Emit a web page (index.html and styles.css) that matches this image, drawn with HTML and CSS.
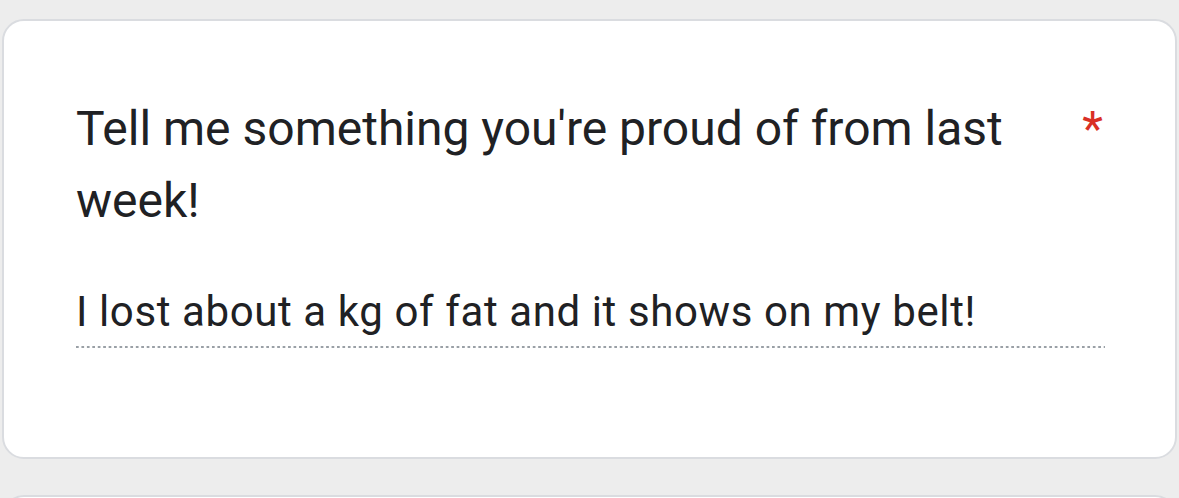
FILE: index.html
```html
<!DOCTYPE html>
<html lang="en">
<head>
<meta charset="utf-8">
<title>Question</title>
<link rel="stylesheet" href="styles.css">
</head>
<body>
<div class="page">
  <div class="card">
    <div class="title-row">
      <div class="title">Tell me something you're proud of from last week!</div>
      <span class="required" aria-label="Required question">*</span>
    </div>
    <div class="answer">
      <div class="answer-text">I lost about a kg of fat and it shows on my belt!</div>
      <div class="dots"></div>
    </div>
  </div>
  <div class="card next"></div>
</div>
</body>
</html>
```

FILE: styles.css
```css
html, body {
  margin: 0;
  padding: 0;
  background: #ededed;
  height: 498px;
  overflow: hidden;
}
body {
  font-family: Roboto, "Noto Sans", Arial, sans-serif;
  color: #202124;
}
.page {
  box-sizing: border-box;
  height: 498px;
  overflow: hidden;
  padding: 19px 2px 0 2px;
  display: flex;
  flex-direction: column;
  gap: 36px;
}
.card {
  box-sizing: border-box;
  background: #fff;
  border: 2px solid #dadce0;
  border-radius: 22px;
  padding: 72px 72px 109px 72px;
  flex-shrink: 0;
}
.card.next {
  height: 200px;
}
.title-row {
  display: flex;
  align-items: flex-start;
}
.title {
  flex: 1;
  font-size: 48px;
  line-height: 72px;
  letter-spacing: 0;
}
.required {
  color: #d93025;
  font-size: 48px;
  line-height: 72px;
  padding-left: 12px;
}
.answer {
  margin-top: 51px;
}
.answer-text {
  font-size: 42px;
  line-height: 48px;
  letter-spacing: 0.6px;
}
.dots {
  margin-top: 10px;
  margin-right: -2px;
  height: 2px;
  background-image: linear-gradient(to right, #9aa0a6 0 2.7px, transparent 2.7px 5.45px);
  background-size: 5.45px 2px;
  background-repeat: repeat-x;
}
```
